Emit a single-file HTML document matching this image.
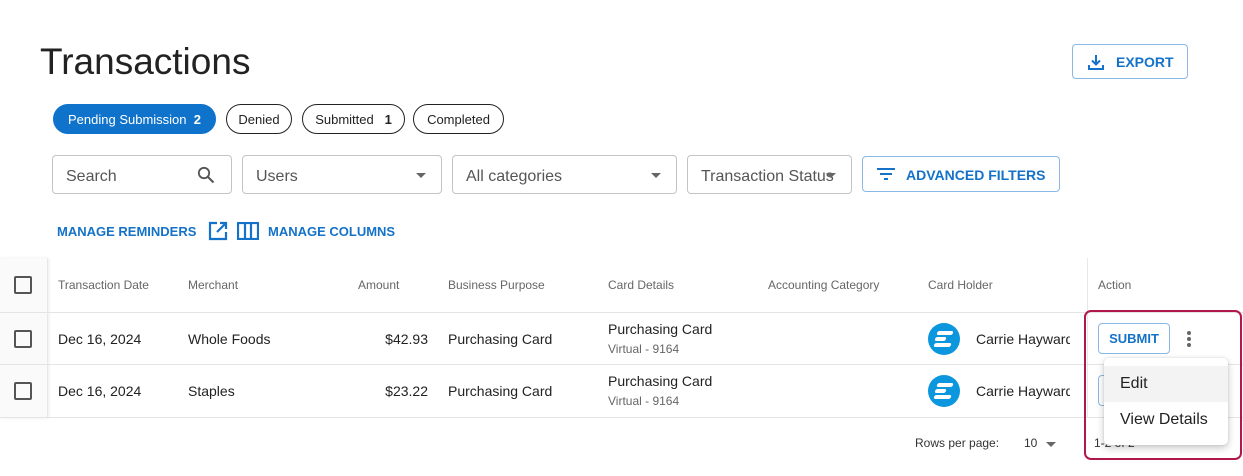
<!DOCTYPE html>
<html><head><style>
*{box-sizing:border-box;margin:0;padding:0}
body{width:1243px;height:476px;background:#fff;font-family:"Liberation Sans",sans-serif;color:#222;position:relative;overflow:hidden}
.a{position:absolute;white-space:nowrap}
.chip{position:absolute;top:104px;height:30px;border:1px solid #222;border-radius:15px;font-size:13px;line-height:29px;text-align:center}
.inp{position:absolute;top:155px;height:39px;border:1px solid #c4c4c4;border-radius:4px;font-size:16px;color:#555;line-height:41px;padding-left:13px;white-space:nowrap}
.tri{position:absolute;top:17px;width:0;height:0;border-left:5px solid transparent;border-right:5px solid transparent;border-top:5px solid #666}
.blue{color:#1472c8;font-weight:bold}
.hd{position:absolute;top:278px;font-size:12px;color:#666;white-space:nowrap}
.c{position:absolute;font-size:14px;color:#222;white-space:nowrap}
.cb{position:absolute;left:14px;width:18px;height:18px;border:2px solid #555;border-radius:2px}
.line{position:absolute;left:0;width:1243px;height:1px;background:#e4e4e4}
.av{position:absolute;left:928px;width:32px;height:32px;border-radius:50%;background:#0b96de;overflow:hidden}
.av i{position:absolute;height:4px;background:#fff;border-radius:2px;transform:skewX(-20deg)}
</style></head><body>
<div class="a" style="left:40px;top:41px;font-size:37px;color:#222">Transactions</div>
<div class="a" style="left:1072px;top:44px;width:116px;height:35px;border:1px solid #8ab8e6;border-radius:4px"></div>
<svg class="a" style="left:1087px;top:53px" width="18" height="18" viewBox="0 0 18 18"><path d="M9 2v9M5 7.5l4 4 4-4M2 12v4h14v-4" fill="none" stroke="#1472c8" stroke-width="2"/></svg>
<div class="a blue" style="left:1116px;top:54px;font-size:14px">EXPORT</div>

<div class="chip" style="left:53px;width:163px;background:#0f73cc;border-color:#0f73cc;color:#fff">Pending Submission&nbsp;&nbsp;<b>2</b></div>
<div class="chip" style="left:226px;width:66px">Denied</div>
<div class="chip" style="left:302px;width:103px">Submitted&nbsp;&nbsp;&nbsp;<b>1</b></div>
<div class="chip" style="left:413px;width:91px">Completed</div>

<div class="inp" style="left:52px;width:180px">Search
<svg style="position:absolute;left:144px;top:10px" width="18" height="18" viewBox="0 0 18 18"><circle cx="7" cy="7" r="5.2" fill="none" stroke="#555" stroke-width="1.8"/><path d="M11 11l5.5 5.5" stroke="#555" stroke-width="2"/></svg></div>
<div class="inp" style="left:242px;width:200px">Users<div class="tri" style="left:173px"></div></div>
<div class="inp" style="left:452px;width:225px">All categories<div class="tri" style="left:198px"></div></div>
<div class="inp" style="left:687px;width:165px;overflow:hidden">Transaction Status<div class="tri" style="left:138px"></div></div>
<div class="a" style="left:862px;top:156px;width:198px;height:36px;border:1px solid #8ab8e6;border-radius:4px"></div>
<svg class="a" style="left:876px;top:166px" width="20" height="16" viewBox="0 0 20 16"><path d="M1 3h18M4 8h12M8 13h4" stroke="#1472c8" stroke-width="2"/></svg>
<div class="a blue" style="left:906px;top:167px;font-size:14px">ADVANCED FILTERS</div>

<div class="a blue" style="left:57px;top:224px;font-size:13px">MANAGE REMINDERS</div>
<svg class="a" style="left:208px;top:221px" width="20" height="20" viewBox="0 0 20 20"><path d="M9 2H2v16h16v-7M12 2h6v6M18 2l-9 9" fill="none" stroke="#1472c8" stroke-width="2.2"/></svg>
<svg class="a" style="left:237px;top:222px" width="22" height="18" viewBox="0 0 22 18"><rect x="1" y="1" width="20" height="16" fill="none" stroke="#1472c8" stroke-width="2.2"/><path d="M8 1v16M14 1v16" stroke="#1472c8" stroke-width="2.2"/></svg>
<div class="a blue" style="left:268px;top:224px;font-size:13px">MANAGE COLUMNS</div>

<div class="a" style="left:0;top:258px;width:48px;height:160px;background:#fafafa;border-right:1px solid #e8e8e8;box-shadow:1px 0 3px rgba(0,0,0,.08)"></div>
<div class="a" style="left:1087px;top:258px;width:1px;height:160px;background:#e8e8e8"></div>
<div class="line" style="top:312px"></div>
<div class="line" style="top:364px"></div>
<div class="line" style="top:417px"></div>
<div class="cb" style="top:276px"></div>
<div class="cb" style="top:330px"></div>
<div class="cb" style="top:382px"></div>
<div class="hd" style="left:58px">Transaction Date</div>
<div class="hd" style="left:188px">Merchant</div>
<div class="hd" style="left:358px">Amount</div>
<div class="hd" style="left:448px">Business Purpose</div>
<div class="hd" style="left:608px">Card Details</div>
<div class="hd" style="left:768px">Accounting Category</div>
<div class="hd" style="left:928px">Card Holder</div>
<div class="hd" style="left:1098px">Action</div>

<div class="c" style="left:58px;top:331px">Dec 16, 2024</div>
<div class="c" style="left:188px;top:331px">Whole Foods</div>
<div class="c" style="left:370px;top:331px;width:58px;text-align:right">$42.93</div>
<div class="c" style="left:448px;top:331px">Purchasing Card</div>
<div class="c" style="left:608px;top:321px">Purchasing Card</div>
<div class="c" style="left:608px;top:342px;font-size:12px;color:#666">Virtual - 9164</div>
<div class="av" style="top:323px"><i style="left:9px;top:8px;width:16px"></i><i style="left:7px;top:14px;width:11px"></i><i style="left:6px;top:20px;width:17px"></i></div>
<div class="c" style="left:976px;top:331px;width:94px;overflow:hidden">Carrie Hayward</div>

<div class="c" style="left:58px;top:383px">Dec 16, 2024</div>
<div class="c" style="left:188px;top:383px">Staples</div>
<div class="c" style="left:370px;top:383px;width:58px;text-align:right">$23.22</div>
<div class="c" style="left:448px;top:383px">Purchasing Card</div>
<div class="c" style="left:608px;top:373px">Purchasing Card</div>
<div class="c" style="left:608px;top:394px;font-size:12px;color:#666">Virtual - 9164</div>
<div class="av" style="top:375px"><i style="left:9px;top:8px;width:16px"></i><i style="left:7px;top:14px;width:11px"></i><i style="left:6px;top:20px;width:17px"></i></div>
<div class="c" style="left:976px;top:383px;width:94px;overflow:hidden">Carrie Hayward</div>

<div class="a" style="left:1098px;top:323px;width:72px;height:31px;border:1px solid #8ab8e6;border-radius:4px;text-align:center;line-height:29px;font-size:13px" ><span class="blue">SUBMIT</span></div>
<div class="a" style="left:1098px;top:375px;width:72px;height:31px;border:1px solid #8ab8e6;border-radius:4px"></div>
<div class="a" style="left:1187px;top:331px;width:4px;height:4px;border-radius:2px;background:#666;box-shadow:0 6px 0 #666,0 12px 0 #666"></div>

<div class="a" style="left:915px;top:436px;font-size:12px;color:#333">Rows per page:</div>
<div class="a" style="left:1024px;top:436px;font-size:12px;color:#333">10</div>
<div class="a" style="left:1046px;top:442px;border-left:5px solid transparent;border-right:5px solid transparent;border-top:5px solid #666"></div>
<div class="a" style="left:1094px;top:436px;font-size:12px;color:#333">1-2 of 2</div>

<div class="a" style="left:1104px;top:358px;width:124px;height:87px;background:#fff;border-radius:5px;box-shadow:0 3px 8px rgba(0,0,0,.22),0 0 2px rgba(0,0,0,.12);overflow:hidden">
<div style="position:absolute;left:0;top:8px;width:124px;height:36px;background:#f3f3f3"></div>
<div style="position:absolute;left:16px;top:17px;font-size:16px;color:#222">Edit</div>
<div style="position:absolute;left:16px;top:53px;font-size:16px;color:#222">View Details</div>
</div>
<div class="a" style="left:1084px;top:310px;width:158px;height:150px;border:2px solid #b0174a;border-radius:7px"></div>
</body></html>
